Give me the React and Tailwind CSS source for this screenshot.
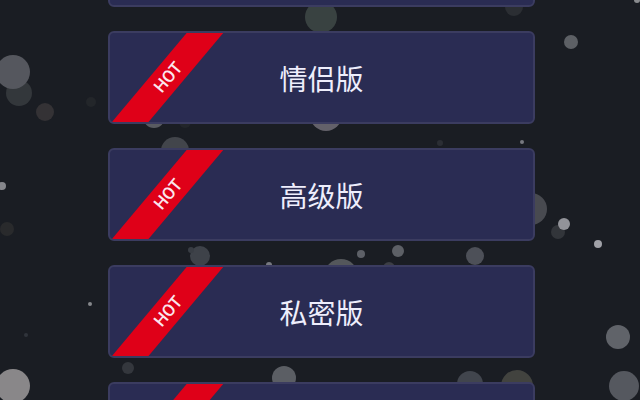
const versions = [
  { id: "classic", title: "" },
  { id: "couple", title: "情侣版", hot: true, label: "HOT" },
  { id: "premium", title: "高级版", hot: true, label: "HOT" },
  { id: "private", title: "私密版", hot: true, label: "HOT" },
  { id: "ultimate", title: "", hot: true },
];

// floating particles: x, y, radius, colour
const particles = [
  [19, 93, 13, "#33373b"],
  [13, 72, 17, "#55575e"],
  [45, 112, 9, "#343235"],
  [91, 102, 5, "#23262a"],
  [2, 186, 4, "#85868b"],
  [7, 229, 7, "#292a2c"],
  [90, 304, 2, "#85878b"],
  [26, 335, 2, "#30343b"],
  [13, 386, 17, "#898789"],
  [154, 117, 11, "#595b61"],
  [175, 151, 14, "#42454b"],
  [185, 122, 6, "#22252a"],
  [200, 256, 10, "#3e4249"],
  [191, 250, 3, "#393d44"],
  [269, 265, 3, "#777980"],
  [128, 368, 6, "#34373d"],
  [284, 378, 12, "#5b5e64"],
  [321, 17, 16, "#394241"],
  [326, 115, 16, "#63616a"],
  [341, 276, 17, "#54575b"],
  [361, 254, 4, "#5d6067"],
  [398, 251, 6, "#5d6066"],
  [389, 268, 6, "#3c3e45"],
  [475, 256, 9, "#4d5058"],
  [440, 143, 3, "#2b2e34"],
  [522, 142, 2, "#777980"],
  [470, 384, 13, "#41454d"],
  [517, 386, 16, "#42433f"],
  [514, 7, 9, "#2b2e33"],
  [571, 42, 7, "#5d6065"],
  [637, 0, 3, "#898b8e"],
  [531, 209, 16, "#484a50"],
  [558, 232, 7, "#32353a"],
  [564, 224, 6, "#929399"],
  [598, 244, 4, "#a0a1a7"],
  [618, 337, 12, "#606369"],
  [624, 386, 15, "#55585f"],
];

const Particles = () => (
  <svg className="pointer-events-none absolute inset-0 h-full w-full" aria-hidden="true">
    {particles.map(([x, y, r, color]) => (
      <circle key={`${x}-${y}`} cx={x} cy={y} r={r} fill={color} />
    ))}
  </svg>
);

const HotRibbon = ({ label }) => (
  <span className="absolute top-[30px] -left-[22px] flex h-7 w-[160px] -rotate-50 items-center justify-center bg-[#df0018] font-['Roboto',sans-serif] text-[17px] font-medium text-[#fbe6ee]">
    {label}
  </span>
);

const VersionButton = ({ title, hot, label }) => (
  <button
    type="button"
    className="relative flex h-[93px] w-full shrink-0 items-center justify-center overflow-hidden rounded-md border-2 border-[#3b3c60] bg-[#2a2c53] text-[28px] leading-10 text-[#eeeefc]"
  >
    {hot && <HotRibbon label={label} />}
    {title}
  </button>
);

const App = () => (
  <main className="relative h-screen overflow-hidden bg-[#1a1d23] pr-[105px] pl-[108px] font-['Noto_Sans_CJK_SC',sans-serif]">
    <Particles />
    {/* the list is scrolled past its first entry */}
    <div className="relative -mt-[86px] flex flex-col gap-6">
      {versions.map((v) => (
        <VersionButton key={v.id} title={v.title} hot={v.hot} label={v.label} />
      ))}
    </div>
  </main>
);

export default App;
